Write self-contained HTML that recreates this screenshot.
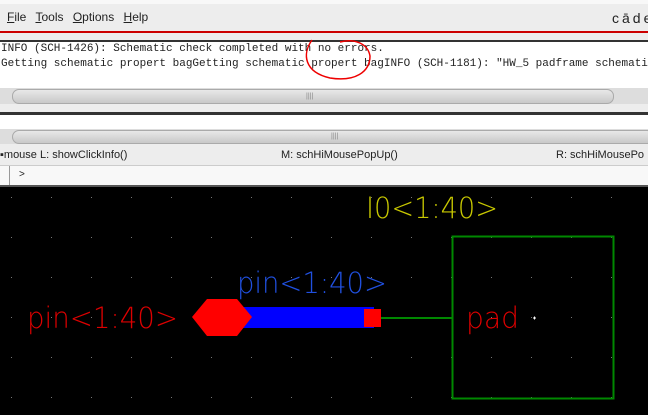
<!DOCTYPE html>
<html><head><style>
body{margin:0;width:648px;height:415px;overflow:hidden;background:#ededed;font-family:"Liberation Sans",sans-serif;position:relative}
.a{position:absolute}
.mono{font-family:"Liberation Mono",monospace;font-size:11px;color:#222;white-space:nowrap}
.sb{background:linear-gradient(#e8e8e8,#c8c8c8);border:1px solid #aaa;border-radius:7px}
</style></head><body>
<div class="a" style="left:0;top:0;width:648px;height:4px;background:#f8f8f8"></div>
<div class="a" style="left:7px;top:10px;font-size:12px;color:#222;word-spacing:6px"><u>F</u>ile <u>T</u>ools <u>O</u>ptions <u>H</u>elp</div>
<div class="a" style="left:612px;top:10px;font-size:14px;letter-spacing:3px;color:#222">cāde</div>
<div class="a" style="left:0;top:31px;width:648px;height:2px;background:#c00"></div>
<div class="a" style="left:0;top:40px;width:648px;height:2px;background:#333"></div>
<div class="a" style="left:0;top:42px;width:648px;height:46px;background:#fff"></div>
<div class="a mono" style="left:1px;top:43px">INFO (SCH-1426): Schematic check completed with no errors.</div>
<div class="a mono" style="left:1px;top:58px">Getting schematic propert bagGetting schematic propert bagINFO (SCH-1181): "HW_5 padframe schematic</div>
<svg class="a" style="left:300px;top:34px" width="80" height="50"><path d="M12 6 C2 20 4 38 30 44 C55 48 70 38 70 22 C68 10 55 4 40 8" fill="none" stroke="#e00" stroke-width="1.5"/></svg>
<div class="a" style="left:0;top:88px;width:648px;height:16px;background:#ddd"></div>
<div class="a sb" style="left:12px;top:89px;width:600px;height:13px"></div>
<div class="a" style="left:306px;top:93px;font-size:7px;color:#888">||||</div>
<div class="a" style="left:0;top:112px;width:648px;height:3px;background:#333"></div>
<div class="a" style="left:0;top:115px;width:648px;height:14px;background:#fff"></div>
<div class="a" style="left:0;top:129px;width:648px;height:15px;background:#ddd"></div>
<div class="a sb" style="left:12px;top:130px;width:640px;height:12px"></div>
<div class="a" style="left:331px;top:133px;font-size:7px;color:#888">||||</div>
<div class="a" style="left:0;top:146px;width:648px;height:18px;font-size:11px;color:#222;line-height:18px">
<span class="a" style="left:0">▪mouse L: showClickInfo()</span>
<span class="a" style="left:281px">M: schHiMousePopUp()</span>
<span class="a" style="left:556px">R: schHiMousePo</span></div>
<div class="a" style="left:0;top:165px;width:648px;height:20px;background:#f8f8f8;border-top:1px solid #ccc"></div>
<div class="a" style="left:9px;top:166px;width:1px;height:19px;background:#999"></div>
<div class="a" style="left:19px;top:169px;font-size:10px;color:#222">&gt;</div>
<div class="a" style="left:0;top:185px;width:648px;height:2px;background:#555"></div>
<svg class="a" style="left:0;top:187px" width="648" height="228">
<defs><pattern id="g" x="11" y="10" width="40" height="40" patternUnits="userSpaceOnUse"><rect width="1" height="1" fill="#777"/></pattern></defs>
<rect width="648" height="228" fill="#000"/>
<rect width="648" height="228" fill="url(#g)"/>
<g font-family="DejaVu Sans ExtraLight,DejaVu Sans,sans-serif" font-size="29" font-weight="200">
<text x="366" y="31" fill="#c8c800" textLength="132" lengthAdjust="spacingAndGlyphs">I0&lt;1:40&gt;</text>
<text x="237" y="106" fill="#2050e0" textLength="150" lengthAdjust="spacingAndGlyphs">pin&lt;1:40&gt;</text>
<text x="27" y="141" fill="#d00" textLength="151" lengthAdjust="spacingAndGlyphs">pin&lt;1:40&gt;</text>
<text x="466" y="141" fill="#d00" textLength="53" lengthAdjust="spacingAndGlyphs">pad</text>
</g>
<rect x="452.5" y="49.5" width="161" height="162" fill="none" stroke="#080" stroke-width="2"/>
<line x1="381" y1="131" x2="452" y2="131" stroke="#080" stroke-width="2"/>
<rect x="241" y="120" width="133" height="21" fill="#00f"/>
<polygon points="192,130 207,112 237,112 252,130 237,149 207,149" fill="#f00"/>
<rect x="364" y="122" width="17" height="18" fill="#f00"/>
<path d="M533 131h3M534.5 129.5v3" stroke="#fff"/>
</svg>
</body></html>
